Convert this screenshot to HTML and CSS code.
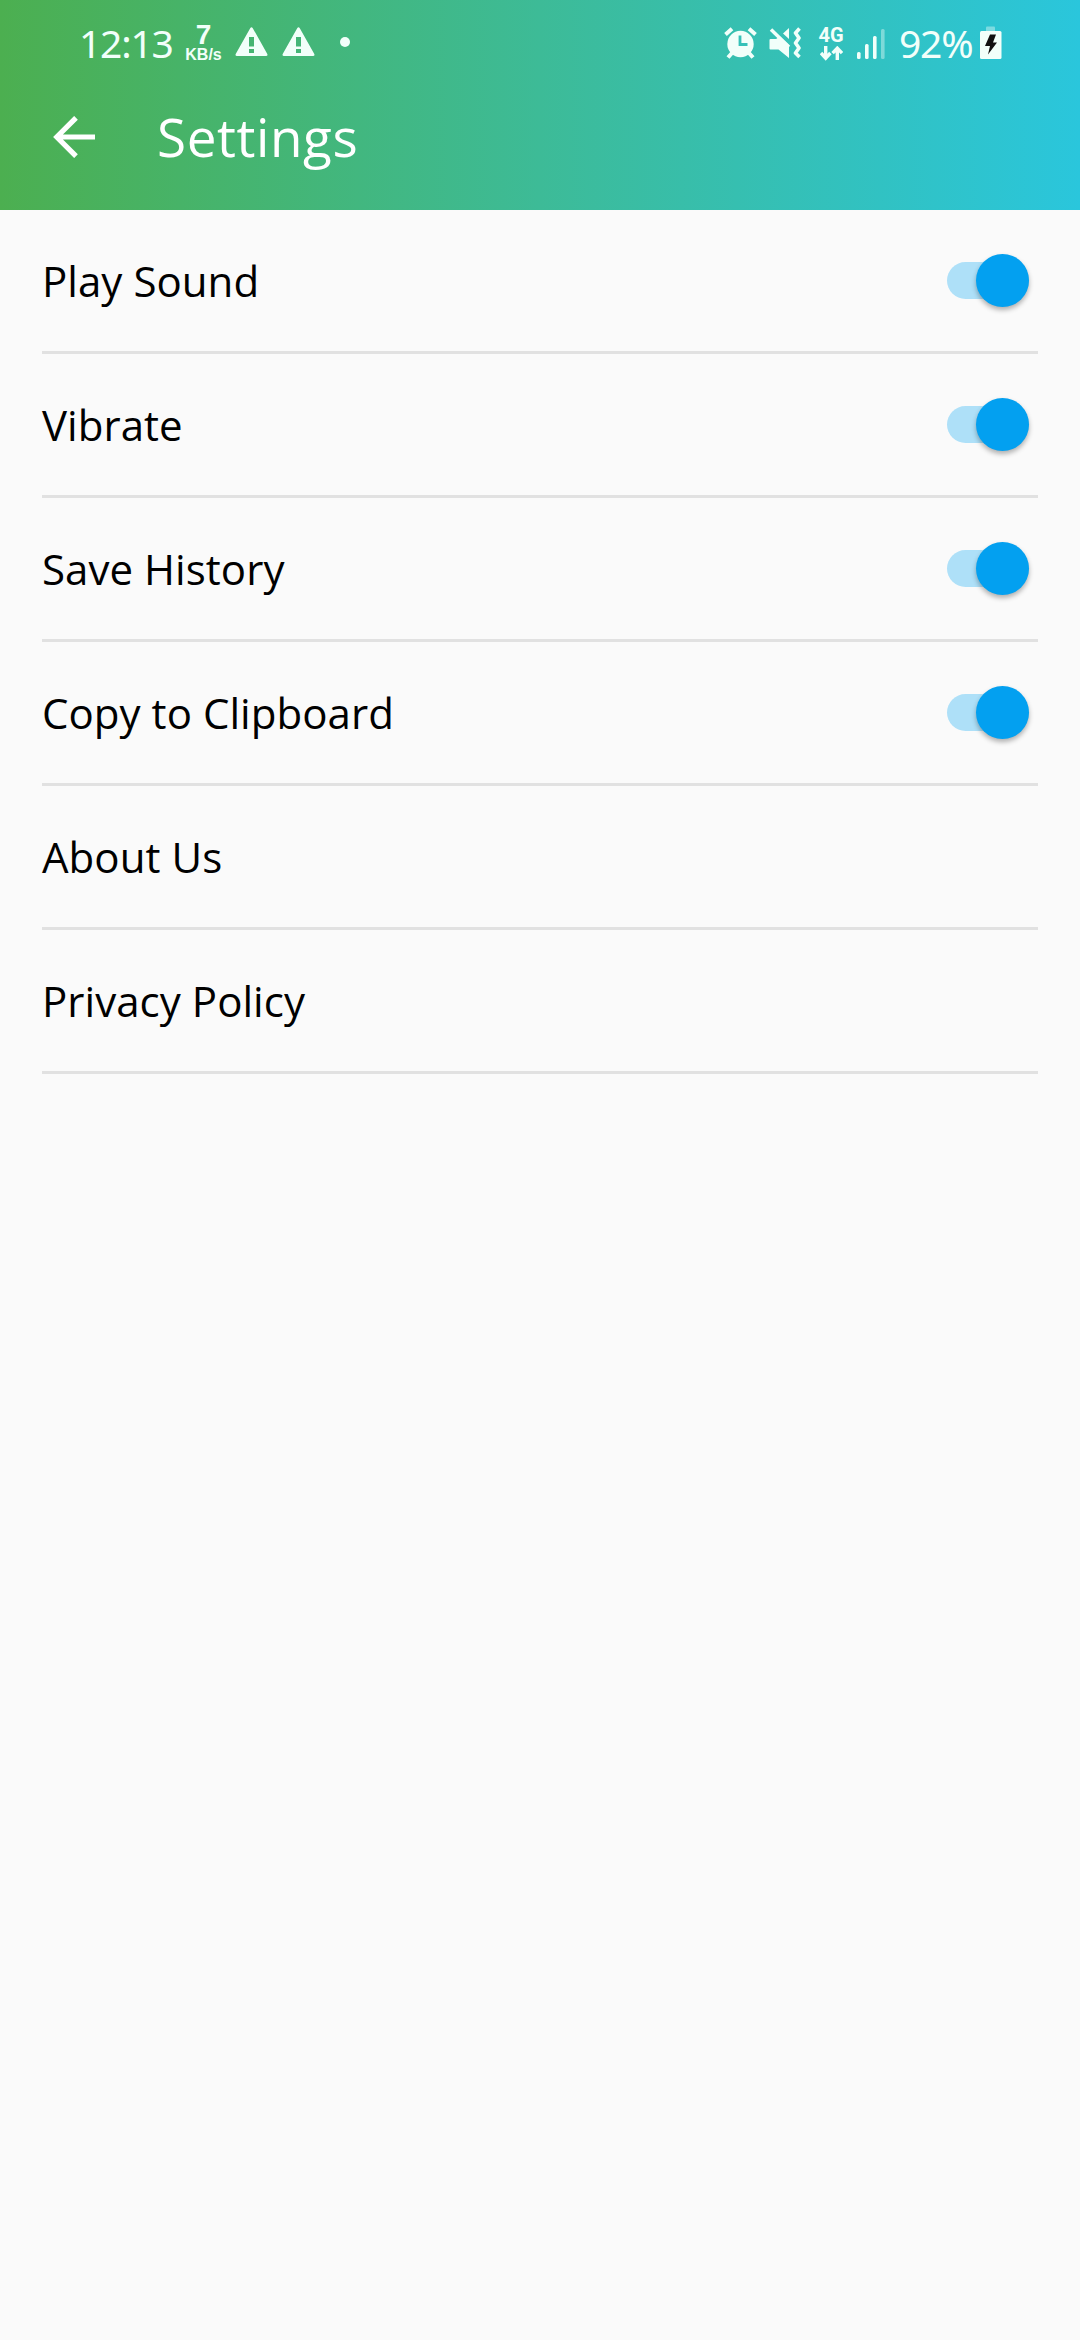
FILE: index.html
```html
<!DOCTYPE html>
<html lang="en">
<head>
<meta charset="utf-8">
<title>Settings</title>
<link rel="stylesheet" href="styles.css">
</head>
<body>
<header class="header">
  <div class="status">
    <div class="status-group">
      <span class="clock">12:13</span>
      <span class="speed"><b class="speed-value">7</b><b class="speed-unit">KB/s</b></span>
      <svg class="warning" width="33" height="30" viewBox="0 0 33 30"><path fill="currentColor" fill-rule="evenodd" d="M15.2 1.2Q16.5-.8 17.8 1.2L32.3 27Q33 29 31 29H2Q0 29 .7 27ZM14 10V19.500H19V10ZM14 22V26H19V22Z"/></svg>
      <svg class="warning" width="33" height="30" viewBox="0 0 33 30"><path fill="currentColor" fill-rule="evenodd" d="M15.2 1.2Q16.5-.8 17.8 1.2L32.3 27Q33 29 31 29H2Q0 29 .7 27ZM14 10V19.500H19V10ZM14 22V26H19V22Z"/></svg>
      <span class="dot"></span>
    </div>
    <div class="status-group">
      <svg class="alarm" width="33" height="32" viewBox="0 0 33 32"><circle cx="16.5" cy="17" r="13.2" fill="currentColor"/><path fill="none" stroke="currentColor" stroke-width="4" d="M1.5 7.5 8 1.8M31.500 7.500 25 1.800M8 26 4 30.500M25 26 29 30.500"/><path class="alarm-hands" fill="none" stroke-width="2.800" d="M16 8.500V17.500H23.500"/></svg>
      <svg class="mute" width="32" height="32" viewBox="0 0 32 32"><path fill="currentColor" d="M.5 13Q.5 12 1.500 12H7L11 9.500 20 18V31L9.500 22.500H1.500Q.5 22.500 .5 21.500ZM14 6.500 20 1V12Z"/><path fill="none" stroke="currentColor" stroke-width="3.400" d="M2 2.500 20 20"/><path fill="none" stroke="currentColor" stroke-width="3.600" stroke-linejoin="round" d="M30.500 1.500 26.500 6 30 11 26.500 16 30 21 26.500 26 30.500 30"/></svg>
      <span class="network"><b class="network-type">4G</b>
        <svg width="23" height="15" viewBox="0 0 23 15"><path fill="none" stroke="currentColor" stroke-width="3.400" d="M5.700 0V12M1 7 5.700 12.200 10.400 7M17.300 14V2M12.600 7.200 17.300 2.200 22 7.200"/></svg>
      </span>
      <svg class="signal" width="28" height="30" viewBox="0 0 28 30"><g fill="currentColor"><rect x="0" y="23" width="3.600" height="7" rx="1.500"/><rect x="8" y="15" width="3.600" height="15" rx="1.500"/><rect x="16" y="7" width="3.600" height="23" rx="1.500"/><rect x="24" y="0" width="3.600" height="30" rx="1.500" opacity=".4"/></g></svg>
      <span class="percent">92%</span>
      <svg class="battery" width="22" height="33" viewBox="0 0 22 33"><path fill="currentColor" opacity=".4" d="M6 5V1.500Q6 .5 7 .5H14Q15 .5 15 1.500V5Z"/><rect x="0" y="5" width="21.500" height="28" rx="1.500" fill="currentColor"/><path class="bolt" d="M10 8.500H16L13 16.500H17L8 28.500 10 20H5Z"/></svg>
    </div>
  </div>
  <div class="toolbar">
    <svg class="back" width="42" height="42" viewBox="0 0 42 42"><path fill="none" stroke="currentColor" stroke-width="5.200" d="M42 21H4M23 1.800 3.800 21 23 40.200"/></svg>
    <h1 class="title">Settings</h1>
  </div>
</header>
<main class="list">
  <div class="row"><span>Play Sound</span><span class="switch"><i class="thumb"></i></span></div>
  <div class="row"><span>Vibrate</span><span class="switch"><i class="thumb"></i></span></div>
  <div class="row"><span>Save History</span><span class="switch"><i class="thumb"></i></span></div>
  <div class="row"><span>Copy to Clipboard</span><span class="switch"><i class="thumb"></i></span></div>
  <div class="row"><span>About Us</span></div>
  <div class="row"><span>Privacy Policy</span></div>
</main>
</body>
</html>
```
FILE: styles.css
```css
* { box-sizing: border-box; }
body {
  margin: 0;
  min-height: 2340px;
  background: #fafafa;
  color: #000;
  font-family: "Open Sans", "Noto Sans", sans-serif;
}
svg { display: block; flex: none; }
.header {
  height: 210px;
  background: linear-gradient(90deg, #4caf50, #3dbb97 50%, #2ac6dc);
  color: #fff;
}
.status {
  height: 84px;
  padding: 0 78px 0 79px;
  display: flex;
  justify-content: space-between;
  color: #f2fffa;
}
.status-group { display: flex; align-items: flex-start; }
.clock, .percent {
  font-family: "Noto Sans", sans-serif;
  font-size: 39px;
  line-height: 54px;
  padding-top: 16px;
  white-space: nowrap;
}
.clock { width: 106px; letter-spacing: -1.2px; }
.speed {
  width: 37px;
  display: flex;
  flex-direction: column;
  align-items: center;
  font-family: "Liberation Sans", sans-serif;
  padding-top: 22px;
}
.speed-value { font-size: 28px; line-height: 26px; }
.speed-unit { font-size: 16px; line-height: 14px; }
.warning { margin: 27px 0 0 13px; }
.warning + .warning { margin-left: 14px; }
.dot {
  width: 10px;
  height: 10px;
  margin: 37px 0 0 25px;
  border-radius: 50%;
  background: currentColor;
}
.alarm { margin-top: 27px; }
.alarm-hands { stroke: #36c1b8; }
.mute { margin: 27px 0 0 12px; }
.network {
  width: 24px;
  margin: 27px 0 0 18px;
  display: flex;
  flex-direction: column;
  align-items: center;
  gap: 2px;
  font-family: Roboto, sans-serif;
}
.network-type { font-size: 20px; line-height: 17px; }
.signal { margin: 29px 0 0 14px; }
.percent { width: 80px; margin-left: 14px; letter-spacing: -1.2px; }
.battery { margin: 26px 0 0 1px; }
.bolt { fill: #111; }
.toolbar {
  height: 105px;
  padding-left: 53px;
  display: flex;
  align-items: center;
  gap: 62px;
}
.title {
  margin: 0;
  font-size: 53px;
  font-weight: 400;
  line-height: 72px;
  letter-spacing: .6px;
}
.list { padding: 0 42px; }
.row {
  height: 144px;
  padding-right: 9px;
  border-bottom: 3px solid #e1e1e1;
  display: flex;
  align-items: center;
  justify-content: space-between;
  font-size: 42px;
  line-height: 57px;
  letter-spacing: .05px;
}
.switch {
  width: 82px;
  height: 37px;
  border-radius: 19px;
  background: #aee0f8;
  display: flex;
  align-items: center;
  justify-content: flex-end;
}
.thumb {
  width: 53px;
  height: 53px;
  flex: none;
  border-radius: 50%;
  background: #03a0f0;
  box-shadow: 0 3px 5px rgba(0, 0, 0, .3);
}
```
